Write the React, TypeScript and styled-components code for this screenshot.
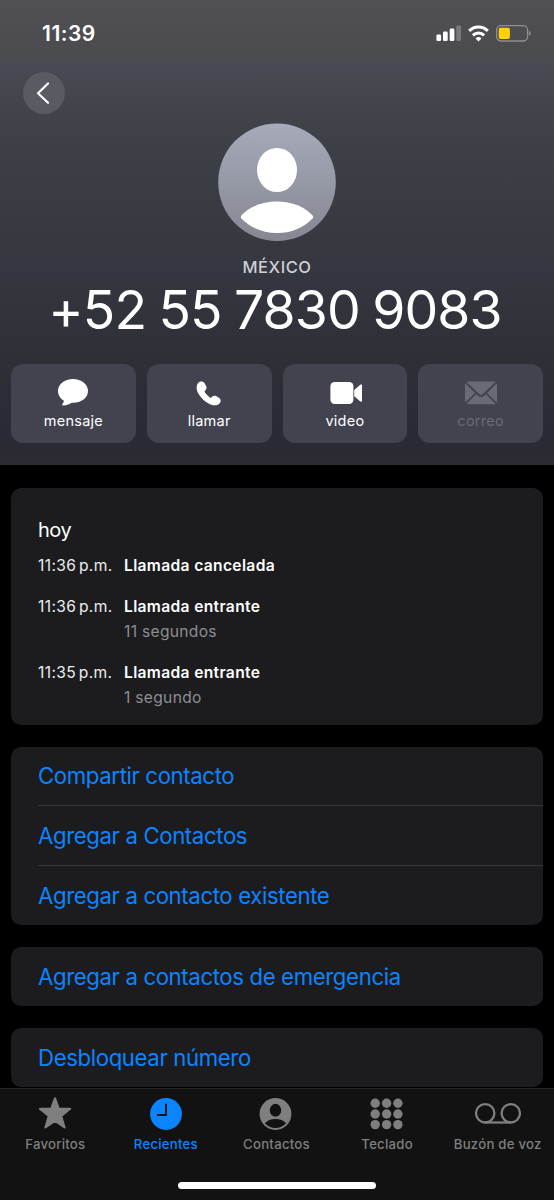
import React from 'react';
import styled, { createGlobalStyle } from 'styled-components';

const GlobalStyle = createGlobalStyle`
  * { box-sizing: border-box; }
  body {
    margin: 0;
    background: #000;
    color: #fff;
    font-family: Inter, 'Liberation Sans', sans-serif;
  }
  button {
    font: inherit;
    color: inherit;
    background: none;
    border: 0;
    padding: 0;
  }
  svg { display: block; flex: none; }
`;

const Screen = styled.div`
  display: flex;
  flex-direction: column;
  width: 554px;
  height: 1200px;
  overflow: hidden;
  background: #000;
`;

const Header = styled.header`
  height: 465px;
  flex: none;
  background: linear-gradient(180deg, #515155 0, #4b4b4f 56px, #484a53 66px, #3e4047 140px, #353740 270px, #2d2f37 370px, #292a34 440px, #2e2b33 465px);
`;

const StatusBar = styled.div`
  display: flex;
  justify-content: space-between;
  height: 72px;
  padding: 23px 23px 0 42px;
`;

const Clock = styled.time`
  font-size: 21px;
  line-height: 21px;
  font-weight: 580;
  letter-spacing: 0.5px;
`;

const StatusIcons = styled.div`
  display: flex;
  align-items: flex-start;
  gap: 7px;
  padding-top: 2px;
`;

const Nav = styled.nav`
  height: 51px;
  padding-left: 23px;
`;

const BackButton = styled.button`
  display: flex;
  align-items: center;
  justify-content: center;
  width: 42px;
  height: 42px;
  padding-right: 3px;
  border-radius: 50%;
  background: #5a5a63;
`;

const Identity = styled.section`
  display: flex;
  flex-direction: column;
  align-items: center;
`;

const Region = styled.div`
  margin-top: 15.5px;
  font-size: 16.5px;
  line-height: 20px;
  font-weight: 500;
  letter-spacing: 0.55px;
  color: #d0d0d4;
`;

const PhoneNumber = styled.h1`
  margin: 0;
  padding-right: 4px;
  font-size: 53.5px;
  line-height: 66px;
  font-weight: 380;
  letter-spacing: -0.85px;
  word-spacing: -2px;
  white-space: nowrap;
`;

const Actions = styled.div`
  display: grid;
  grid-template-columns: repeat(4, 1fr);
  gap: 11px;
  margin-top: 21.5px;
  padding: 0 11px;
`;

const ActionButton = styled.button<{ $disabled?: boolean }>`
  display: flex;
  flex-direction: column;
  align-items: center;
  height: 78.5px;
  padding-top: 13px;
  border-radius: 12px;
  background: #42434f;
  color: ${({ $disabled }) => ($disabled ? '#686a74' : '#fff')};
`;

const ActionLabel = styled.span`
  margin-top: 1.5px;
  font-size: 14.5px;
  line-height: 20px;
  letter-spacing: 0.25px;
`;

const Content = styled.main`
  flex: 1;
  min-height: 0;
  overflow: hidden;
  display: flex;
  flex-direction: column;
  gap: 21.5px;
  padding: 23.4px 11px 0;
`;

const Card = styled.section`
  flex: none;
  border-radius: 10px;
  background: #1c1c1e;
  overflow: hidden;
`;

const History = styled(Card)`
  height: 236.8px;
  padding: 30px 27px 0;
`;

const Day = styled.h2`
  margin: 0 0 10.5px;
  font-size: 20px;
  line-height: 24px;
  font-weight: 400;
  letter-spacing: -0.5px;
`;

const Call = styled.div`
  display: grid;
  grid-template-columns: 86px 1fr;
  margin-bottom: 16px;
  font-size: 15.6px;
  line-height: 25px;
`;

const CallTime = styled.time`
  color: #ececee;
  letter-spacing: 0.35px;
  word-spacing: -2px;
  white-space: nowrap;
`;

const CallType = styled.div`
  font-weight: 600;
  letter-spacing: 0.34px;
`;

const Duration = styled.div`
  color: #8d8d93;
  letter-spacing: 0.3px;
`;

const LinkRow = styled.button`
  display: block;
  width: calc(100% - 27px);
  height: 59.5px;
  margin-left: 27px;
  text-align: left;
  font-size: 22.2px;
  letter-spacing: -0.38px;
  color: #0b84ff;

  &:not(:last-child) {
    border-bottom: 1px solid #37373a;
  }
`;

const TabBar = styled.footer`
  flex: none;
  display: flex;
  flex-direction: column;
  align-items: center;
  height: 112px;
  border-top: 1px solid #242426;
  background: #121212;
`;

const Tabs = styled.nav`
  display: grid;
  grid-template-columns: repeat(5, 1fr);
  width: 100%;
  height: 93px;
  padding: 6px 1px 0 0;
`;

const Tab = styled.button<{ $active?: boolean }>`
  display: flex;
  flex-direction: column;
  align-items: center;
  height: 60px;
  color: ${({ $active }) => ($active ? '#0b84ff' : '#7f7f7f')};
`;

const TabLabel = styled.span`
  margin-top: 4.4px;
  font-size: 13.2px;
  line-height: 18px;
  font-weight: 500;
  letter-spacing: 0.24px;
  white-space: nowrap;
`;

const HomeIndicator = styled.div`
  width: 198px;
  height: 7px;
  border-radius: 4px;
  background: #fff;
`;

const SignalIcon = () => (
  <svg width="25" height="17" viewBox="0 0 25 17" fill="#fff">
    <rect x="0.4" y="9.5" width="4.7" height="6.5" rx="1.3" />
    <rect x="7" y="6.6" width="4.7" height="9.4" rx="1.3" />
    <rect x="13.7" y="3.6" width="4.7" height="12.4" rx="1.3" />
    <rect x="20.3" y="0.4" width="4.7" height="15.6" rx="1.3" opacity="0.25" />
  </svg>
);

const WifiIcon = () => (
  <svg width="21" height="17" viewBox="0 0 21 17" fill="none" stroke="#fff" strokeWidth="3.1">
    <path d="M1.2 5.900a13.200 13.200 0 0 1 18.600 0" />
    <path d="M4.900 10.300a7.900 7.900 0 0 1 11.200 0" />
    <path d="M10.500 16.400l-2.900-2.900a4.100 4.100 0 0 1 5.800 0z" fill="#fff" stroke="none" />
  </svg>
);

const BatteryIcon = () => (
  <svg width="35" height="17" viewBox="0 0 35 17">
    <rect x="0.6" y="0.6" width="31" height="15.4" rx="4.4" fill="none" stroke="#8e8e92" strokeWidth="1.3" />
    <path d="M33 5.800c2.300.8 2.300 4.200 0 5z" fill="#8e8e92" />
    <rect x="2.700" y="2.700" width="11.200" height="11.200" rx="2" fill="#ffd10a" />
  </svg>
);

const BackIcon = () => (
  <svg width="14" height="22" viewBox="0 0 14 22" fill="none" stroke="#fff" strokeWidth="2.2" strokeLinecap="round" strokeLinejoin="round">
    <path d="M12 1.500L2 11.200 12 20.800" />
  </svg>
);

const Avatar = () => (
  <svg width="118" height="118" viewBox="0 0 118 118">
    <defs>
      <linearGradient id="avatar" x1="0" y1="0" x2="0" y2="1">
        <stop offset="0" stopColor="#a6aaba" />
        <stop offset="1" stopColor="#858791" />
      </linearGradient>
    </defs>
    <circle cx="59" cy="59.2" r="58.8" fill="url(#avatar)" />
    <ellipse cx="59" cy="47" rx="20" ry="22.1" fill="#fff" />
    <path d="M23.400 92.600C31 83.900 44 78.600 59 78.600s28 5.300 35.600 14q1.200 1.500 0 2.800C85.500 104.900 73 110 59 110S32.500 104.900 23.400 95.400q-1.200-1.300 0-2.800z" fill="#fff" />
  </svg>
);

const MessageIcon = () => (
  <svg width="34" height="32" viewBox="0 0 34 32" fill="currentColor">
    <path d="M17 1.900C8.600 1.900 2 7.200 2 13.900c0 4 2.300 7.500 5.700 9.500.3 1.400-.3 2.300-1.100 3.300-.7.900-.3 2.100.9 1.900 3.300-.5 6.200-1.500 8.200-2.900h1.300c8.400 0 15-5.100 15-11.800S25.400 1.900 17 1.900z" />
  </svg>
);

const PhoneIcon = () => (
  <svg width="34" height="32" viewBox="0 0 34 32" fill="currentColor">
    <path d="M6.400 5.200C8.300 3 11.600 3.300 12.700 5.200l2 3.400c.8 1.400.5 2.800-.5 4.100l-.9 1c-.4.500-.3 1 0 1.500 1.400 2 3.300 3.900 5.300 5.300.5.300 1.100.4 1.600 0l1-.9c1.200-1 2.700-1.200 4-.5l3.300 2c2 1.200 2.100 4.200 0 6.100-2.500 2.300-6.600 2.200-10.800.1C11.900 24.300 7 19 5.200 13.600 4.100 10.200 4.600 7.300 6.400 5.200z" transform="translate(.2 .9) scale(.95)" />
  </svg>
);

const VideoIcon = () => (
  <svg width="34" height="32" viewBox="0 0 34 32" fill="currentColor">
    <rect x="2.400" y="5" width="23" height="22" rx="4.200" />
    <path d="M26.900 13v6.200l5.800 5.100c1 .8 2.300.4 2.300-.9V8.700c0-1.300-1.300-1.600-2.300-.8z" transform="translate(-.7 0)" />
  </svg>
);

const MailIcon = () => (
  <svg width="34" height="32" viewBox="0 0 34 32" fill="currentColor">
    <path d="M2.500 4.900Q3.200 4.600 4 4.600h26q.8 0 1.500.3L18.500 17.300q-1.500 1.300-3 0z" />
    <path d="M1.200 6.300L11 15.900 1.200 25.500Q1 25 1 24.300V7.500q0-.7.200-1.200zM32.800 6.300L23 15.900l9.800 9.600q.2-.5.200-1.200V7.500q0-.7-.2-1.200z" />
    <path d="M12.300 17.100l1.900 1.800q2.800 2.300 5.600 0l1.900-1.800 9.800 9.600q-.7.600-1.500.6H4q-.8 0-1.500-.6z" />
  </svg>
);

const StarIcon = () => (
  <svg width="46" height="36" viewBox="0 0 46 36" fill="currentColor" stroke="currentColor" strokeWidth="2" strokeLinejoin="round">
    <path d="M23 3.200l3.900 10.600h11.300l-8.900 7.200 3.300 11.500-9.600-6.600-9.600 6.600 3.300-11.500-8.900-7.200h11.300z" />
  </svg>
);

const RecentsIcon = () => (
  <svg width="46" height="36" viewBox="0 0 46 36">
    <circle cx="23" cy="19" r="15.900" fill="currentColor" />
    <path d="M23 9.500v10.500h-8.300" fill="none" stroke="#121212" strokeWidth="1.900" strokeLinecap="round" strokeLinejoin="round" />
  </svg>
);

const ContactIcon = () => (
  <svg width="46" height="36" viewBox="0 0 46 36">
    <circle cx="22.500" cy="19" r="15.900" fill="currentColor" />
    <ellipse cx="22.500" cy="15.200" rx="5.700" ry="6.400" fill="#121212" />
    <path d="M11.900 28.300c2.300-2.900 6.200-4.300 10.600-4.300s8.300 1.400 10.600 4.300c-2.800 3-6.500 4.700-10.600 4.700s-7.800-1.700-10.600-4.700z" fill="#121212" />
  </svg>
);

const KeypadIcon = () => (
  <svg width="46" height="36" viewBox="0 0 46 36" fill="currentColor">
    {[8.2, 19, 29.6].map((y) =>
      [11.2, 22.6, 33.9].map((x) => <circle key={`${x}-${y}`} cx={x} cy={y} r="4.700" />)
    )}
  </svg>
);

const VoicemailIcon = () => (
  <svg width="48" height="36" viewBox="0 0 48 36" fill="none" stroke="currentColor" strokeWidth="2.300">
    <circle cx="11.200" cy="18.300" r="9.200" />
    <circle cx="36.800" cy="18.300" r="9.200" />
    <path d="M11.200 27.500h25.600" />
  </svg>
);

const actions = [
  { label: 'mensaje', icon: <MessageIcon /> },
  { label: 'llamar', icon: <PhoneIcon /> },
  { label: 'video', icon: <VideoIcon /> },
  { label: 'correo', icon: <MailIcon />, disabled: true },
];

const calls = [
  { time: '11:36 p.m.', type: 'Llamada cancelada' },
  { time: '11:36 p.m.', type: 'Llamada entrante', duration: '11 segundos' },
  { time: '11:35 p.m.', type: 'Llamada entrante', duration: '1 segundo' },
];

const linkGroups = [
  ['Compartir contacto', 'Agregar a Contactos', 'Agregar a contacto existente'],
  ['Agregar a contactos de emergencia'],
  ['Desbloquear número'],
];

const tabs = [
  { label: 'Favoritos', icon: <StarIcon /> },
  { label: 'Recientes', icon: <RecentsIcon />, active: true },
  { label: 'Contactos', icon: <ContactIcon /> },
  { label: 'Teclado', icon: <KeypadIcon /> },
  { label: 'Buzón de voz', icon: <VoicemailIcon /> },
];

export default function App() {
  return (
    <Screen>
      <GlobalStyle />
      <Header>
        <StatusBar>
          <Clock>11:39</Clock>
          <StatusIcons>
            <SignalIcon />
            <WifiIcon />
            <BatteryIcon />
          </StatusIcons>
        </StatusBar>
        <Nav>
          <BackButton aria-label="Atrás">
            <BackIcon />
          </BackButton>
        </Nav>
        <Identity>
          <Avatar />
          <Region>MÉXICO</Region>
          <PhoneNumber>+52 55 7830 9083</PhoneNumber>
        </Identity>
        <Actions>
          {actions.map((a) => (
            <ActionButton key={a.label} $disabled={a.disabled}>
              {a.icon}
              <ActionLabel>{a.label}</ActionLabel>
            </ActionButton>
          ))}
        </Actions>
      </Header>
      <Content>
        <History>
          <Day>hoy</Day>
          {calls.map((c, i) => (
            <Call key={i}>
              <CallTime>{c.time}</CallTime>
              <div>
                <CallType>{c.type}</CallType>
                {c.duration && <Duration>{c.duration}</Duration>}
              </div>
            </Call>
          ))}
        </History>
        {linkGroups.map((group) => (
          <Card key={group[0]}>
            {group.map((label) => (
              <LinkRow key={label}>{label}</LinkRow>
            ))}
          </Card>
        ))}
      </Content>
      <TabBar>
        <Tabs>
          {tabs.map((t) => (
            <Tab key={t.label} $active={t.active}>
              {t.icon}
              <TabLabel>{t.label}</TabLabel>
            </Tab>
          ))}
        </Tabs>
        <HomeIndicator />
      </TabBar>
    </Screen>
  );
}
